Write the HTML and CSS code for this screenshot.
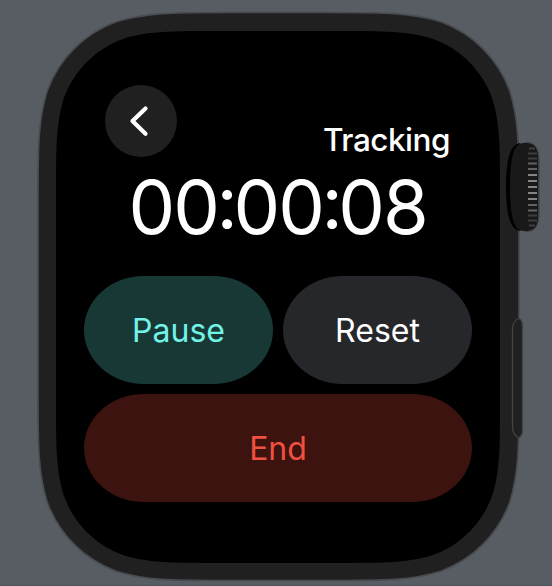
FILE: index.html
```html
<!DOCTYPE html>
<html lang="en">
<head>
<meta charset="utf-8">
<title>Tracking</title>
<link rel="stylesheet" href="styles.css">
</head>
<body>
<main class="watch">
  <svg class="case" viewBox="0 0 552 586" aria-hidden="true">
    <path d="M38 202C38 147.400 38 120.100 47.300 90.700C59 58.700 84.200 33.500 116.200 21.800C145.600 12.500 172.900 12.500 227.500 12.500H329.500C384.100 12.500 411.400 12.500 440.800 21.800C472.800 33.500 498 58.700 509.700 90.700C519 120.100 519 147.400 519 202V391C519 445.600 519 472.900 509.700 502.300C498 534.300 472.800 559.500 440.800 571.200C411.400 580.500 384.100 580.500 329.500 580.500H227.500C172.900 580.500 145.600 580.500 116.200 571.200C84.200 559.500 59 534.300 47.300 502.300C38 472.900 38 445.600 38 391Z" fill="#202020" stroke="#484c50" stroke-width="1.600"/>
    <path d="M56 193C56 146.300 56 123 63.900 97.900C73.900 70.500 95.500 48.900 122.900 38.900C148 31 171.300 31 218 31H338C384.700 31 408 31 433.100 38.900C460.500 48.900 482.100 70.500 492.100 97.900C500 123 500 146.300 500 193V401C500 447.700 500 471 492.100 496.100C482.100 523.500 460.500 545.100 433.100 555.100C408 563 384.700 563 338 563H218C171.300 563 148 563 122.900 555.100C95.500 545.100 73.900 523.500 63.900 496.100C56 471 56 447.700 56 401Z" fill="#000"/>
    <path d="M520 143C510 145 506 159 506 187S510 229 520 231Z" fill="#000"/>
    <path d="M523 143H527C536 143 538.500 150 538.500 160V214C538.500 224 536 231 527 231H523C514 231 510 217 510 187S514 143 523 143Z" fill="#191919"/>
    <path d="M525 142.500H527C536 142.500 539 150 539 160V214C539 224 536 231.500 527 231.500H525" fill="none" stroke="#414347"/>
    <path d="M529 148.500h6M528 153.500h9M528 158.500h9M528 215.500h9M528 220.500h9M529 225.500h6" stroke="#3e3e3e" stroke-width="2"/>
    <path d="M528 163.500h9M528 169h9M528 205h9M528 210.500h9" stroke="#626262" stroke-width="2"/>
    <path d="M528 175h9M528 181h9M528 187h9M528 193h9M528 199h9" stroke="#858585" stroke-width="2"/>
    <path d="M519 318.500C514 320 512.500 324 512.500 330V426C512.500 432 514 436 519 437.500C521.500 436.500 522.500 434 522.500 430V326C522.500 322 521.500 319.500 519 318.500Z" fill="#202020" stroke="#424344" stroke-width="1.300"/>
  </svg>
  <section class="screen">
    <header class="top">
      <button class="back" aria-label="Back">
        <svg viewBox="0 0 72 72"><path d="M40.500 23.500L27.500 36L40.500 48.700" fill="none" stroke="#fff" stroke-width="4.200" stroke-linecap="round" stroke-linejoin="round"/></svg>
      </button>
      <h1 class="title">Tracking</h1>
    </header>
    <div class="timer">00<span class="colon">:</span>00<span class="colon">:</span>08</div>
    <div class="actions">
      <button class="action pause">Pause</button>
      <button class="action reset">Reset</button>
      <button class="action end">End</button>
    </div>
  </section>
</main>
</body>
</html>
```
FILE: styles.css
```css
* {
  box-sizing: border-box;
}

body {
  margin: 0;
  background: #585c63;
  font-family: Inter, "Liberation Sans", sans-serif;
  color: #fff;
}

button {
  border: 0;
  padding: 0;
  font-family: inherit;
}

.watch {
  position: relative;
  width: 552px;
  height: 586px;
  overflow: hidden;
  border-bottom: 1px solid #505358;
}

.case {
  position: absolute;
  top: 0;
  left: 0;
  width: 552px;
  height: 586px;
}

.screen {
  position: relative;
  display: flex;
  flex-direction: column;
  padding: 85px 80px 0 84px;
}

.top {
  display: flex;
  justify-content: space-between;
  height: 72px;
  padding: 0 22px 0 21px;
}

.back {
  width: 72px;
  height: 72px;
  border-radius: 50%;
  background: #202020;
}

.back svg {
  display: block;
  width: 72px;
  height: 72px;
}

.title {
  margin: 35px 0 0;
  font-size: 31.500px;
  line-height: 40px;
  font-weight: 500;
  letter-spacing: -0.500px;
}

.timer {
  height: 119px;
  padding-left: 44.500px;
  font-size: 74px;
  line-height: 100px;
  letter-spacing: -1.900px;
  white-space: nowrap;
}

.colon {
  display: inline-block;
  margin-left: -1.500px;
  letter-spacing: -4.500px;
  transform: translateY(-5px);
}

.actions {
  display: grid;
  grid-template-columns: 189px 189px;
  grid-auto-rows: 108px;
  gap: 10px;
}

.action {
  border-radius: 60px / 54px;
  font-size: 32px;
  line-height: 40px;
  padding-top: 2px;
}

.pause {
  background: #183836;
  color: #73f3e8;
}

.reset {
  background: #26272b;
  color: #fff;
}

.end {
  grid-column: span 2;
  background: #3c130f;
  color: #f0503f;
}
```
